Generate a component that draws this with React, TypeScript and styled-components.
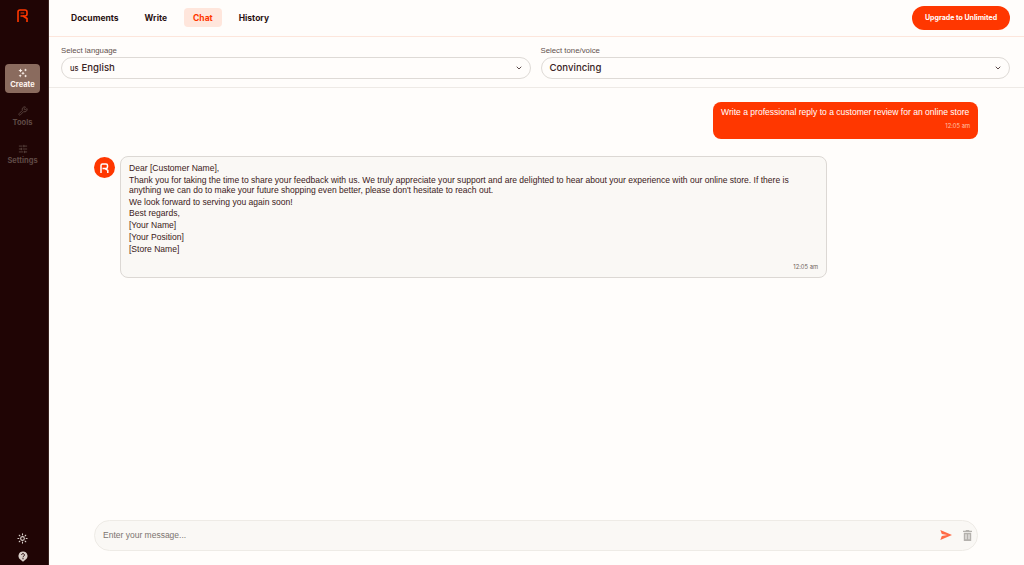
import React from 'react'
import styled, { createGlobalStyle } from 'styled-components'
import { ChevronDown, SlidersHorizontal, Sun, Wrench } from 'lucide-react'

const brand = '#ff3700'
const dark = '#200505'
const heading = '"Inter", "Liberation Sans", sans-serif'
const body = '"Liberation Sans", Arial, sans-serif'

const Global = createGlobalStyle`
  html, body { margin: 0; padding: 0; height: 100%; background: #fffdfb; }
  * { box-sizing: border-box; }
`

const Page = styled.main`
  display: flex;
  width: 1024px;
  height: 565px;
  overflow: hidden;
  background: #fffdfb;
  color: ${dark};
`

const Sidebar = styled.nav`
  width: 49px;
  flex: none;
  display: flex;
  flex-direction: column;
  align-items: center;
  background: ${dark};
  border-right: 1px solid #3b2420;
  padding: 9px 3px 0 0;
`

const Logo = styled.svg`
  width: 11px;
  height: 13px;
  margin-bottom: 42px;
`

const NavItem = styled.a<{ $active?: boolean }>`
  width: 35px;
  height: 29px;
  margin-bottom: 9px;
  display: flex;
  flex-direction: column;
  align-items: center;
  justify-content: center;
  gap: 2px;
  border-radius: 4px;
  background: ${(p) => (p.$active ? '#8a6b5e' : 'transparent')};
  color: ${(p) => (p.$active ? '#fff4ee' : '#5f4a45')};
  font: 700 7.5px ${heading};
`

const FootIcons = styled.div`
  margin-top: auto;
  display: flex;
  flex-direction: column;
  align-items: center;
  gap: 7px;
  padding-bottom: 3px;
  color: #d9cfc9;
`

const Content = styled.div`
  flex: 1;
  min-width: 0;
  display: flex;
  flex-direction: column;
`

const TopBar = styled.header`
  height: 37px;
  flex: none;
  display: flex;
  align-items: center;
  justify-content: space-between;
  padding: 0 14px 1px 13px;
  border-bottom: 1px solid #fde6dc;
`

const Tabs = styled.div`
  display: flex;
  align-items: center;
  gap: 8px;
`

const Tab = styled.a<{ $active?: boolean }>`
  height: 19px;
  display: flex;
  align-items: center;
  padding: 0 9px;
  border-radius: 4px;
  font: 700 8.5px ${heading};
  background: ${(p) => (p.$active ? '#ffe6dc' : 'transparent')};
  color: ${(p) => (p.$active ? brand : '#2a1212')};
`

const Upgrade = styled.button`
  width: 98px;
  height: 24px;
  border: 0;
  padding: 0;
  border-radius: 12px;
  background: ${brand};
  color: #fff;
  font: 700 7px ${heading};
`

const Selects = styled.section`
  height: 51px;
  flex: none;
  display: flex;
  gap: 10px;
  padding: 9px 14px 0 12px;
  border-bottom: 1px solid #eeeae6;
`

const Field = styled.div`
  flex: 1;
  min-width: 0;
`

const Label = styled.div`
  font: 7.8px/10px ${body};
  color: #62504c;
  margin-bottom: 1px;
`

const SelectBox = styled.div`
  height: 22px;
  display: flex;
  align-items: center;
  justify-content: space-between;
  padding: 0 7px 1px 8px;
  border: 1px solid #dedad6;
  border-radius: 11px;
  font: 500 9.6px ${heading};
  color: #3a2424;
`

const Flag = styled.span`
  font-size: 7.5px;
  margin-right: 3px;
`

const Messages = styled.section`
  flex: 1;
  min-height: 0;
  padding: 14px 46px 0 45px;
  display: flex;
  flex-direction: column;
`

const UserBubble = styled.div`
  align-self: flex-end;
  width: 265px;
  height: 37px;
  padding: 5px 8px 0 8px;
  border-radius: 8px;
  background: ${brand};
  color: #fff;
  font: 8.55px/11px ${body};
  white-space: nowrap;
`

const Time = styled.div<{ $user?: boolean }>`
  text-align: right;
  font: 5.8px/8px ${heading};
  color: ${(p) => (p.$user ? '#ffc4ae' : '#6b5d58')};
`

const UserTime = styled(Time)`
  margin-top: 4px;
`

const BotRow = styled.div`
  display: flex;
  gap: 5px;
  margin-top: 17px;
`

const Avatar = styled.div`
  width: 21px;
  height: 21px;
  margin-top: 1px;
  flex: none;
  display: flex;
  align-items: center;
  justify-content: center;
  border-radius: 50%;
  background: ${brand};
`

const BotBubble = styled.div`
  width: 707px;
  height: 122px;
  padding: 6px 8px 0 8px;
  background: #faf8f5;
  border: 1px solid #dcd8d4;
  border-radius: 8px;
`

const Para = styled.p`
  margin: 0 0 1.75px;
  font: 8.55px/10px ${body};
  color: #3a2020;
`

const BotTime = styled(Time)`
  margin-top: 9px;
`

const Composer = styled.div`
  flex: none;
  height: 31px;
  margin: 0 46px 14px 45px;
  display: flex;
  align-items: center;
  padding: 0 5px 1px 8px;
  gap: 11px;
  background: #faf8f5;
  border: 1px solid #eeebe6;
  border-radius: 16px;
`

const Placeholder = styled.div`
  flex: 1;
  font: 8.5px ${body};
  color: #7b7470;
`

const SparkleIcon = () => (
  <svg width='10' height='10' viewBox='0 0 10 10' fill='currentColor'>
    <path d='M2.5 0.5 3.2 2 4.6 2.6 3.2 3.2 2.5 4.6 1.8 3.2 0.4 2.6 1.8 2Z' />
    <path d='M7.5 0.5 8 1.6 9.2 2 8 2.5 7.5 3.6 7 2.5 5.9 2 7 1.6Z' />
    <path d='M5 3.6 5.6 4.7 6.8 5.2 5.6 5.7 5 6.9 4.4 5.7 3.2 5.2 4.4 4.7Z' />
    <path d='M2.2 6.2 2.7 7.3 3.8 7.8 2.7 8.3 2.2 9.4 1.7 8.3 0.6 7.8 1.7 7.3Z' />
    <path d='M7.6 6.4 8.1 7.4 9.2 7.9 8.1 8.4 7.6 9.5 7.1 8.4 6 7.9 7.1 7.4Z' />
  </svg>
)

const HelpIcon = () => (
  <svg width='10' height='11' viewBox='0 0 10 11'>
    <path d='M5 0.5a4.5 4.5 0 0 1 2.4 8.3L5 10.7 2.6 8.8A4.5 4.5 0 0 1 5 0.5Z' fill='#d9cfc9' />
    <path d='M3.6 3.9a1.4 1.4 0 1 1 2.1 1.3c-.5.3-.7.5-.7 1.1' fill='none' stroke={dark} strokeWidth='1' />
    <circle cx='5' cy='7.7' r='.6' fill={dark} />
  </svg>
)

const SendIcon = () => (
  <svg width='12' height='10' viewBox='0 0 12 10' fill='#ff6a45'>
    <path d='M0.3 0 12 5 0.3 10 1.8 5.9 7.2 5 1.8 4.1Z' />
  </svg>
)

const TrashIcon = () => (
  <svg width='9' height='11' viewBox='0 0 9 11' fill='#b4b1ad'>
    <path d='M3 0h3l.5.8H9V2H0V.8h2.5Z' />
    <path fillRule='evenodd' d='M.8 2.8h7.4V11H.8ZM2.5 4.3v5h1v-5ZM5.5 4.3v5h1v-5Z' />
  </svg>
)

const App: React.FC = () => {
  return (
    <Page>
      <Global />
      <Sidebar>
        <Logo viewBox='0 0 11 13' fill='none' stroke={brand} strokeWidth='1.6'>
          <path d='M1 13V3a2 2 0 0 1 2-2h5a2 2 0 0 1 2 2v2a2 2 0 0 1-2 2H3.5' />
          <path d='M6 7 10 9.5V13' />
          <path d='M3.6 4h3.6' strokeWidth='1' />
        </Logo>
        <NavItem $active>
          <SparkleIcon />
          Create
        </NavItem>
        <NavItem>
          <Wrench size={10} />
          Tools
        </NavItem>
        <NavItem>
          <SlidersHorizontal size={10} />
          Settings
        </NavItem>
        <FootIcons>
          <Sun size={11} strokeWidth={2.4} />
          <HelpIcon />
        </FootIcons>
      </Sidebar>
      <Content>
        <TopBar>
          <Tabs>
            <Tab>Documents</Tab>
            <Tab>Write</Tab>
            <Tab $active>Chat</Tab>
            <Tab>History</Tab>
          </Tabs>
          <Upgrade>Upgrade to Unlimited</Upgrade>
        </TopBar>
        <Selects>
          <Field>
            <Label>Select language</Label>
            <SelectBox>
              <span>
                <Flag>us</Flag>English
              </span>
              <ChevronDown size={8} strokeWidth={2.5} />
            </SelectBox>
          </Field>
          <Field>
            <Label>Select tone/voice</Label>
            <SelectBox>
              Convincing
              <ChevronDown size={8} strokeWidth={2.5} />
            </SelectBox>
          </Field>
        </Selects>
        <Messages>
          <UserBubble>
            Write a professional reply to a customer review for an online store
            <UserTime $user>12:05 am</UserTime>
          </UserBubble>
          <BotRow>
            <Avatar>
              <svg width='9' height='10' viewBox='0 0 9 10' fill='none' stroke='#fff' strokeWidth='1.5'>
                <path d='M1 10V2.5A1.5 1.5 0 0 1 2.5 1h3.5A1.5 1.5 0 0 1 7.5 2.5v1.5A1.5 1.5 0 0 1 6 5.5H2.5' />
                <path d='M5 5.5 7.8 7.5V10' />
              </svg>
            </Avatar>
            <BotBubble>
              <Para>Dear [Customer Name],</Para>
              <Para>
                Thank you for taking the time to share your feedback with us. We truly appreciate your
                support and are delighted to hear about your experience with our online store. If there is
                anything we can do to make your future shopping even better, please don't hesitate to reach
                out.
              </Para>
              <Para>We look forward to serving you again soon!</Para>
              <Para>Best regards,</Para>
              <Para>[Your Name]</Para>
              <Para>[Your Position]</Para>
              <Para>[Store Name]</Para>
              <BotTime>12:05 am</BotTime>
            </BotBubble>
          </BotRow>
        </Messages>
        <Composer>
          <Placeholder>Enter your message...</Placeholder>
          <SendIcon />
          <TrashIcon />
        </Composer>
      </Content>
    </Page>
  )
}

export default App
